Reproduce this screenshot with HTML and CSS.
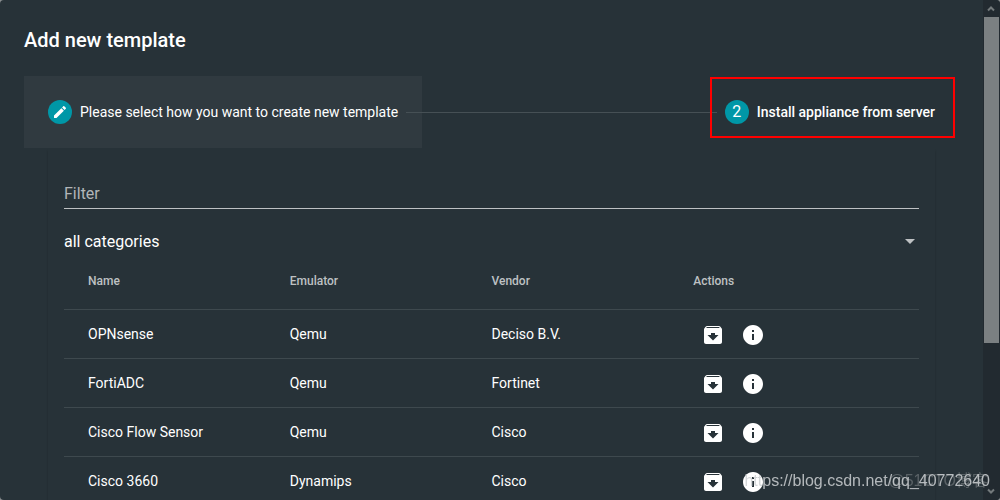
FILE: index.html
```html
<!DOCTYPE html>
<html lang="en">
<head>
<meta charset="utf-8">
<title>Add new template</title>
<link rel="stylesheet" href="styles.css">
</head>
<body>
<svg class="symbols" aria-hidden="true">
  <symbol id="archive" viewBox="0 0 24 24"><path d="M20.54 5.23l-1.39-1.68C18.88 3.21 18.47 3 18 3H6c-.47 0-.88.21-1.16.55L3.46 5.23C3.17 5.57 3 6.02 3 6.5V19c0 1.1.9 2 2 2h14c1.1 0 2-.9 2-2V6.5c0-.48-.17-.93-.46-1.27zM12 17.5L6.5 12H10v-2h4v2h3.500L12 17.500zM5.120 5l.81-1h12l.94 1H5.120z"/></symbol>
  <symbol id="info" viewBox="0 0 24 24"><path d="M12 2C6.480 2 2 6.480 2 12s4.480 10 10 10 10-4.480 10-10S17.520 2 12 2zm1 15h-2v-6h2v6zm0-8h-2V7h2v2z"/></symbol>
</svg>
<div class="dialog">
  <main class="content">
    <h1 class="title">Add new template</h1>
    <div class="stepper">
      <button class="step step-done" type="button">
        <span class="badge"><svg class="pencil" viewBox="0 0 24 24"><path d="M3 17.250V21h3.750L17.810 9.940l-3.750-3.750L3 17.250zM20.710 7.040c.39-.39.39-1.020 0-1.410l-2.340-2.340c-.39-.39-1.020-.39-1.410 0l-1.830 1.830 3.750 3.750 1.830-1.830z"/></svg></span>
        <span>Please select how you want to create new template</span>
      </button>
      <span class="line"></span>
      <button class="step step-current" type="button">
        <span class="badge">2</span>
        <span>Install appliance from server</span>
      </button>
    </div>
    <section class="panel">
      <input class="filter" type="text" placeholder="Filter" aria-label="Filter">
      <div class="category">
        <select class="select" aria-label="Category"><option>all categories</option></select>
      </div>
      <table class="table">
        <thead><tr><th>Name</th><th>Emulator</th><th>Vendor</th><th>Actions</th></tr></thead>
        <tbody>
          <tr><td>OPNsense</td><td>Qemu</td><td>Deciso B.V.</td><td><div class="actions"><button class="icon" type="button" aria-label="Install"><svg><use href="#archive"/></svg></button><button class="icon" type="button" aria-label="Details"><svg><use href="#info"/></svg></button></div></td></tr>
          <tr><td>FortiADC</td><td>Qemu</td><td>Fortinet</td><td><div class="actions"><button class="icon" type="button" aria-label="Install"><svg><use href="#archive"/></svg></button><button class="icon" type="button" aria-label="Details"><svg><use href="#info"/></svg></button></div></td></tr>
          <tr><td>Cisco Flow Sensor</td><td>Qemu</td><td>Cisco</td><td><div class="actions"><button class="icon" type="button" aria-label="Install"><svg><use href="#archive"/></svg></button><button class="icon" type="button" aria-label="Details"><svg><use href="#info"/></svg></button></div></td></tr>
          <tr><td>Cisco 3660</td><td>Dynamips</td><td>Cisco</td><td><div class="actions"><button class="icon" type="button" aria-label="Install"><svg><use href="#archive"/></svg></button><button class="icon" type="button" aria-label="Details"><svg><use href="#info"/></svg></button></div></td></tr>
        </tbody>
      </table>
    </section>
  </main>
  <div class="scrollbar" aria-hidden="true">
    <svg class="arrow" viewBox="0 0 16 16"><path d="M5 10l3-3 3 3"/></svg>
    <div class="track"><div class="thumb"></div></div>
    <svg class="arrow" viewBox="0 0 16 16"><path d="M5 6l3 3 3-3"/></svg>
  </div>
</div>
<div class="mark mark-faint">@51CTO博客</div>
<div class="mark">https://blog.csdn.net/qq_40772640</div>
</body>
</html>
```
FILE: styles.css
```css
* { box-sizing: border-box; }
body {
  margin: 0;
  background: #8b8f91;
  color: #fff;
  font: 14px/20px Roboto, "Noto Sans CJK SC", sans-serif;
}
button, input, select { font: inherit; color: inherit; }
.symbols { display: none; }
.dialog {
  display: flex;
  height: 100vh;
  overflow: hidden;
  border-radius: 4px;
  background: #273238;
}
.content { flex: 1; padding: 24px; min-width: 0; }
.title { margin: 0 0 20px; font-size: 20px; line-height: 32px; font-weight: 500; }
.stepper { display: flex; align-items: center; }
.step {
  position: relative;
  display: flex;
  align-items: center;
  gap: 8px;
  height: 72px;
  padding: 0 24px;
  border: 0;
  background: none;
  white-space: nowrap;
}
.step-done { background: #303a40; }
.step-current { z-index: 2; font-weight: 500; }
.step-current::after {
  content: "";
  position: absolute;
  inset: 1px 4px 10px 9px;
  border: 2px solid #f00;
}
.badge {
  display: flex;
  align-items: center;
  justify-content: center;
  width: 24px;
  height: 24px;
  border-radius: 50%;
  background: #0097a7;
  font-size: 16px;
  font-weight: 400;
}
.pencil { width: 16px; height: 16px; fill: #fff; }
.line { z-index: 1; flex: 1; height: 1px; margin: 0 -16px; background: #465055; }
.panel {
  margin: 0 24px;
  padding: 28px 16px 16px;
  box-shadow: 0 3px 2px rgba(0, 0, 0, .2);
}
.filter {
  display: block;
  width: 100%;
  height: 33px;
  padding: 2px 0 0;
  border: 0;
  border-bottom: 1px solid #bec1c3;
  background: none;
  outline: 0;
  font-size: 16px;
}
.filter::placeholder { color: #b2b6b8; opacity: 1; }
.category { position: relative; padding: 20px 0 0; }
.category::after {
  content: "";
  position: absolute;
  right: 4px;
  bottom: 9px;
  border: 5px solid transparent;
  border-top-color: #bec1c3;
  border-bottom: 0;
}
.select {
  display: block;
  width: 100%;
  height: 24px;
  padding: 2px 0 0;
  border: 0;
  appearance: none;
  background: none;
  font-size: 16px;
}
.table { width: 100%; border-collapse: separate; border-spacing: 0; table-layout: fixed; }
th, td { padding: 0; text-align: left; border-bottom: 1px solid #3e494e; }
th { width: 23.6%; height: 57px; font-size: 12px; font-weight: 500; color: #bec1c3; }
td { height: 49px; }
th:first-child, th:last-child { width: 26.4%; }
th:first-child, td:first-child { padding-left: 24px; }
th:last-child, td:last-child { padding-right: 24px; }
.actions { display: flex; padding-top: 2px; }
.icon {
  display: flex;
  align-items: center;
  justify-content: center;
  width: 40px;
  height: 40px;
  padding: 0;
  border: 0;
  background: none;
}
.icon svg { width: 24px; height: 24px; fill: #fff; }
.scrollbar { display: flex; flex-direction: column; width: 17px; background: #222a30; }
.arrow { width: 16px; height: 17px; fill: none; stroke: #73797b; stroke-width: 2; }
.track { flex: 1; }
.thumb { height: 70%; margin: 0 1px; background: #7b8082; }
.mark {
  position: fixed;
  right: 10px;
  bottom: 8px;
  color: rgba(205, 208, 210, .85);
  font-family: "Liberation Sans", "Noto Sans CJK SC", sans-serif;
  font-size: 16px;
  line-height: 22px;
  white-space: nowrap;
}
.mark-faint { right: 12px; color: rgba(150, 155, 158, .45); }
```
